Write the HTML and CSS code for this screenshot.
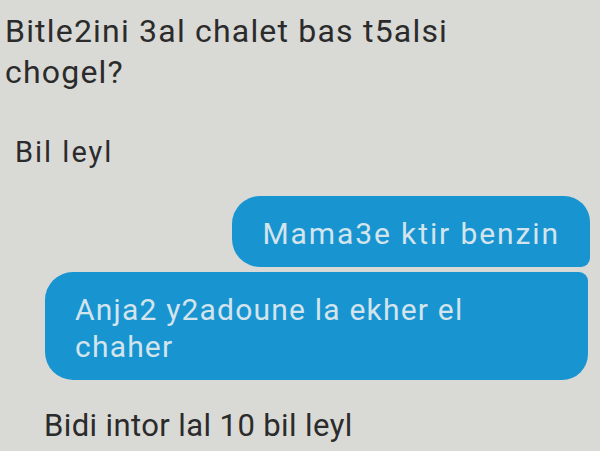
FILE: index.html
```html
<html>
<head>
    <meta charset="utf-8">
    <link rel="stylesheet" href="styles.css">
</head>
<body>
    <div class="chat">
        <div class="msg in first">Bitle2ini 3al chalet bas t5alsi<br>chogel?</div>
        <div class="msg in second">Bil leyl</div>
        <div class="msg out top">Mama3e ktir benzin</div>
        <div class="msg out bottom wide">Anja2 y2adoune la ekher el<br>chaher</div>
        <div class="msg in last">Bidi intor lal 10 bil leyl</div>
    </div>
</body>
</html>
```

FILE: styles.css
```css
html, body{
    margin: 0;
    padding: 0;
    width: 100%;
    height: 100%;
}
body{
    background: #d9d9d6;
    font-family: Roboto, "Liberation Sans", sans-serif;
    overflow: hidden;
}
.chat{
    display: flex;
    flex-direction: column;
    padding: 11px 10px 0 0;
}
.msg.in{
    color: #2b2b2b;
    font-size: 31px;
    line-height: 41px;
}
.first{
    padding-left: 5px;
    font-size: 32px !important;
    letter-spacing: 1.2px;
}
.second{
    padding-left: 15px;
    margin-top: 41px;
    font-size: 29px !important;
    line-height: 37px !important;
    letter-spacing: 2px;
}
.last{
    padding-left: 44px;
    margin-top: 25px;
    letter-spacing: 0.4px;
}
.msg.out{
    align-self: flex-end;
    background: #1894d1;
    color: #d3e4ec;
    font-size: 30px;
    line-height: 37px;
    padding: 19px 30px 15px 30px;
}
.top{
    margin-top: 25px;
    letter-spacing: 1.9px;
    border-radius: 28px 26px 9px 28px;
}
.bottom{
    margin-top: 5px;
    letter-spacing: 1.2px;
    border-radius: 28px 9px 26px 28px;
}
.wide{
    align-self: stretch !important;
    margin-left: 45px;
    margin-right: 2px;
}
```
